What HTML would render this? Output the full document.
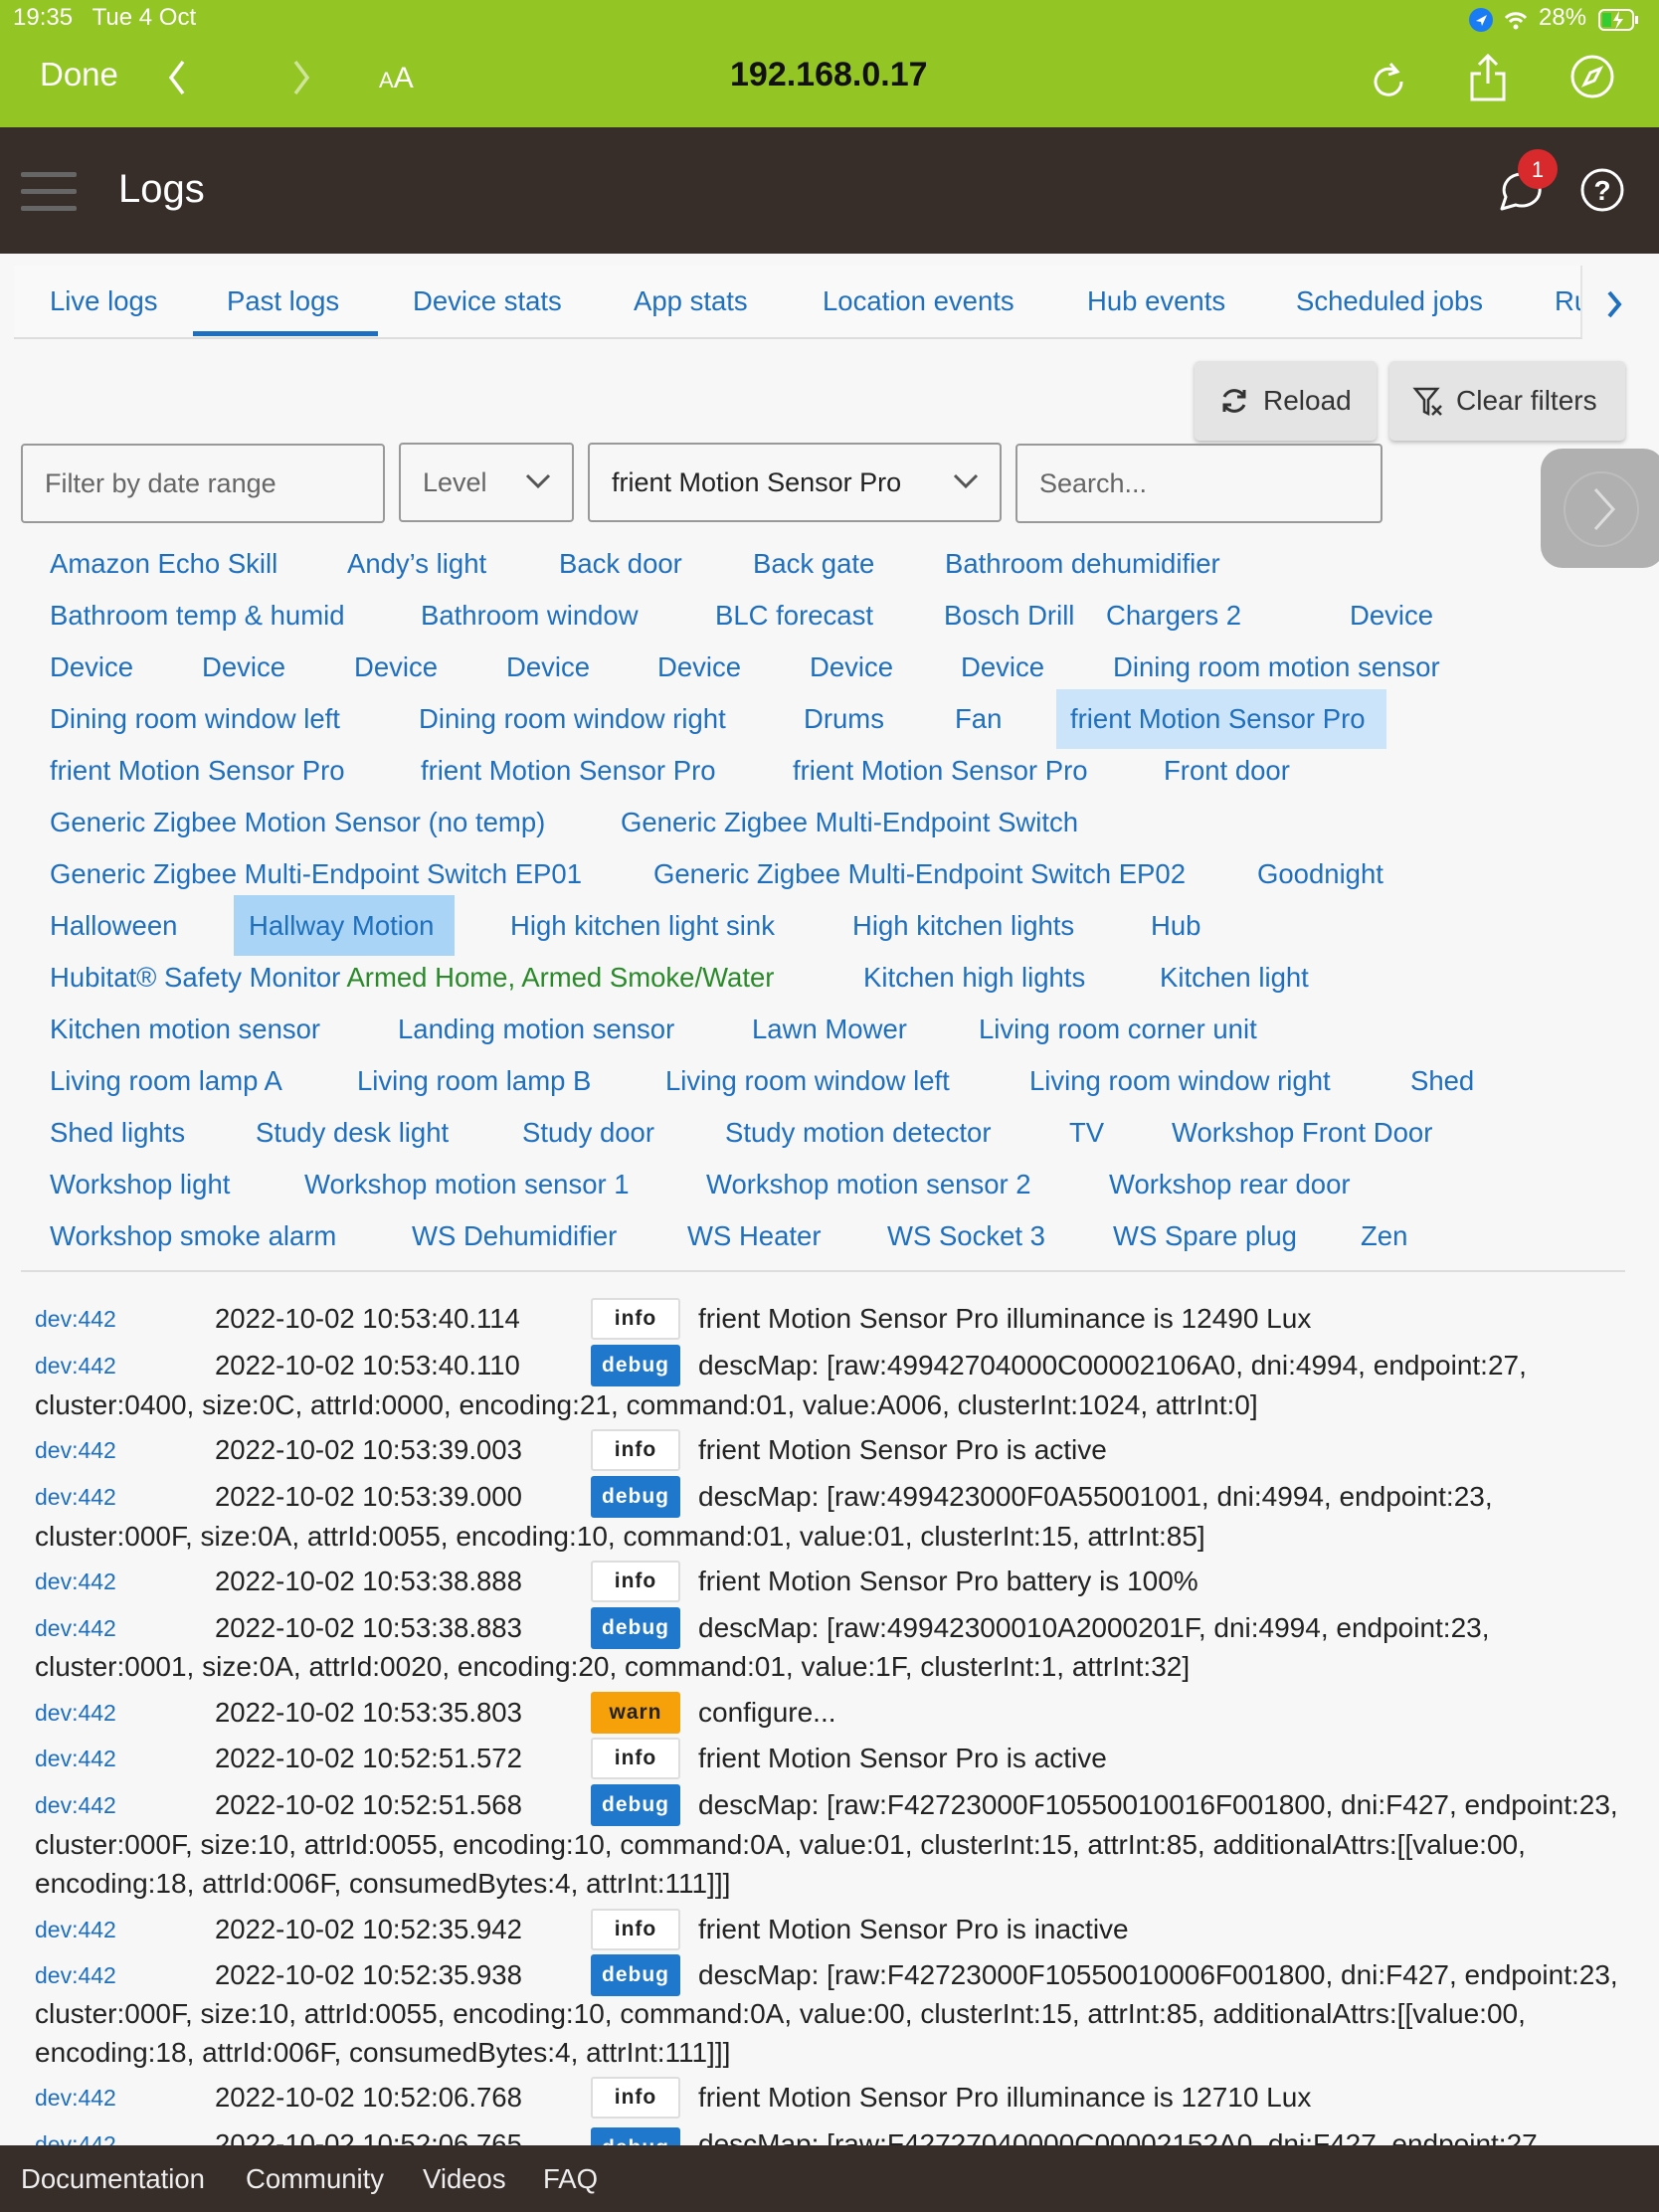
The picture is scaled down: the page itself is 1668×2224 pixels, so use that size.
<!DOCTYPE html>
<html><head><meta charset="utf-8"><style>
*{box-sizing:border-box;margin:0;padding:0}
body{width:1668px;height:2224px;overflow:hidden;background:#f7f7f7;font-family:"Liberation Sans",sans-serif;position:relative}
.a{position:absolute;white-space:nowrap}
.lk{color:#1f6fbf;font-size:27.5px;line-height:40px}
.dv{color:#1f6fbf;font-size:23px;line-height:40px}
.dt{color:#222;font-size:27.5px;line-height:40px}
.ms{color:#222;font-size:28px;line-height:40px}
.bd{position:absolute;width:90px;height:42px;border-radius:3px;font-size:21px;font-weight:bold;text-align:center;line-height:42px;letter-spacing:1px}
.info{background:#fff;border:2px solid #ddd;color:#222;line-height:38px}
.debug{background:#1f78cc;color:#fff}
.warn{background:#f7a10a;color:#222}
.box{position:absolute;border:2px solid #999;border-radius:4px;height:80px;font-size:27px;line-height:76px;padding-left:22px;color:#666}
</style></head><body>
<!-- status/browser bar -->
<div class="a" style="left:0;top:0;width:1668px;height:128px;background:#93c524"></div>
<div class="a" style="left:13px;top:4px;color:#fff;font-size:24px">19:35&nbsp;&nbsp; Tue 4 Oct</div>
<div class="a" style="left:1547px;top:4px;color:#fff;font-size:24px">28%</div>
<svg class="a" style="left:1476px;top:6px" width="60" height="28"><circle cx="13" cy="14" r="12" fill="#1a7cf5"/><path d="M8 15l11-6-5 11-1-4z" fill="#fff"/><path d="M38 12a14 14 0 0 1 20 0M42 16a8 8 0 0 1 12 0" stroke="#fff" stroke-width="3" fill="none"/><circle cx="48" cy="21" r="2.5" fill="#fff"/></svg>
<svg class="a" style="left:1604px;top:6px" width="60" height="28"><rect x="4" y="4" width="34" height="20" rx="5" stroke="#fff" stroke-width="2" fill="none"/><rect x="7" y="7" width="9" height="14" fill="#3c3"/><path d="M24 5l-6 10h5l-3 9 8-11h-5z" fill="#fff"/><rect x="40" y="10" width="3" height="8" fill="#fff"/></svg>
<div class="a" style="left:40px;top:56px;color:#fff;font-size:33px">Done</div>
<svg class="a" style="left:160px;top:56px" width="40" height="44"><path d="M24 6L12 22l12 16" stroke="#fff" stroke-width="3.5" fill="none"/></svg>
<svg class="a" style="left:285px;top:56px" width="40" height="44"><path d="M12 6l12 16-12 16" stroke="#cfe59a" stroke-width="3.5" fill="none"/></svg>
<div class="a" style="left:381px;top:62px;color:#fff;font-size:30px"><span style="font-size:22px">A</span>A</div>
<div class="a" style="left:734px;top:56px;color:#111;font-size:34px;font-weight:bold">192.168.0.17</div>
<svg class="a" style="left:1376px;top:58px" width="40" height="44"><path d="M28 14a13 13 0 1 0 5 10" stroke="#fff" stroke-width="3" fill="none"/><path d="M22 6l7 8-9 3" stroke="#fff" stroke-width="3" fill="none"/></svg>
<svg class="a" style="left:1474px;top:52px" width="44" height="52"><path d="M22 4v28M13 13l9-9 9 9" stroke="#fff" stroke-width="3" fill="none"/><path d="M15 22H6v26h32V22h-9" stroke="#fff" stroke-width="3" fill="none"/></svg>
<svg class="a" style="left:1578px;top:54px" width="46" height="46"><circle cx="23" cy="23" r="20" stroke="#fff" stroke-width="3" fill="none"/><path d="M31 15l-6 12-10 4 6-12z" stroke="#fff" stroke-width="3" fill="none"/></svg>
<!-- app bar -->
<div class="a" style="left:0;top:128px;width:1668px;height:127px;background:#372e2a"></div>
<div class="a" style="left:21px;top:173px;width:56px;height:5px;background:#666;border-radius:2px"></div>
<div class="a" style="left:21px;top:190px;width:56px;height:5px;background:#666;border-radius:2px"></div>
<div class="a" style="left:21px;top:207px;width:56px;height:5px;background:#666;border-radius:2px"></div>
<div class="a" style="left:119px;top:168px;color:#fff;font-size:40px">Logs</div>
<svg class="a" style="left:1500px;top:150px" width="140" height="80"><path d="M10 60l4-12a18 16 0 1 1 10 8z" stroke="#fff" stroke-width="3" fill="none" stroke-linejoin="round"/><circle cx="46" cy="20" r="20" fill="#d8292c"/><text x="46" y="28" fill="#fff" font-size="22" text-anchor="middle" font-family="Liberation Sans">1</text><circle cx="111" cy="41" r="20" stroke="#fff" stroke-width="3" fill="none"/><text x="111" y="51" fill="#fff" font-size="28" font-weight="bold" text-anchor="middle" font-family="Liberation Sans">?</text></svg>
<!-- tabs -->
<div class="a" style="left:14px;top:267px;width:1577px;height:74px;background:#f9f9f9;border-bottom:2px solid #ddd;border-right:2px solid #e4e4e4"></div>
<div class="a lk" style="left:50px;top:283px">Live logs</div>
<div class="a lk" style="left:228px;top:283px">Past logs</div>
<div class="a lk" style="left:415px;top:283px">Device stats</div>
<div class="a lk" style="left:637px;top:283px">App stats</div>
<div class="a lk" style="left:827px;top:283px">Location events</div>
<div class="a lk" style="left:1093px;top:283px">Hub events</div>
<div class="a lk" style="left:1303px;top:283px">Scheduled jobs</div>
<div class="a lk" style="left:1563px;top:283px;width:26px;overflow:hidden">Ru</div>
<div class="a" style="left:194px;top:333px;width:186px;height:5px;background:#1f6fbf"></div>
<svg class="a" style="left:1612px;top:288px" width="24" height="36"><path d="M6 6l10 12-10 12" stroke="#1f6fbf" stroke-width="4" fill="none"/></svg>
<!-- buttons -->
<div class="a" style="left:1201px;top:363px;width:183px;height:80px;background:#e4e4e4;border-radius:5px;box-shadow:0 2px 4px rgba(0,0,0,.25)"></div>
<svg class="a" style="left:1226px;top:388px" width="30" height="30"><path d="M25 11A11 11 0 0 0 5 11M5 19a11 11 0 0 0 20 0" stroke="#333" stroke-width="3" fill="none"/><path d="M25 4v7h-7M5 26v-7h7" stroke="#333" stroke-width="3" fill="none"/></svg>
<div class="a" style="left:1270px;top:383px;color:#333;font-size:28px;line-height:40px">Reload</div>
<div class="a" style="left:1397px;top:363px;width:237px;height:80px;background:#e4e4e4;border-radius:5px;box-shadow:0 2px 4px rgba(0,0,0,.25)"></div>
<svg class="a" style="left:1420px;top:388px" width="32" height="32"><path d="M3 3h22l-9 11v14l-4-2V14z" stroke="#333" stroke-width="2.5" fill="none"/><path d="M20 20l9 9M29 20l-9 9" stroke="#333" stroke-width="2.5"/></svg>
<div class="a" style="left:1464px;top:383px;color:#333;font-size:28px;line-height:40px">Clear filters</div>
<!-- inputs -->
<div class="box" style="left:21px;top:446px;width:366px">Filter by date range</div>
<div class="box" style="left:401px;top:445px;width:176px">Level</div>
<svg class="a" style="left:527px;top:474px" width="28" height="20"><path d="M3 4l11 11 11-11" stroke="#555" stroke-width="3" fill="none"/></svg>
<div class="box" style="left:591px;top:445px;width:416px;color:#222">frient Motion Sensor Pro</div>
<svg class="a" style="left:957px;top:474px" width="28" height="20"><path d="M3 4l11 11 11-11" stroke="#555" stroke-width="3" fill="none"/></svg>
<div class="box" style="left:1021px;top:446px;width:369px">Search...</div>
<div class="a" style="left:1549px;top:451px;width:125px;height:120px;background:#b0b0b0;border-radius:22px"></div>
<svg class="a" style="left:1568px;top:470px" width="84" height="84"><circle cx="42" cy="42" r="37" stroke="#bdbdbd" stroke-width="2" fill="none"/><path d="M36 22l18 20-18 20" stroke="#ddd" stroke-width="3" fill="none"/></svg>
<!-- device list -->
<div class="a" style="left:1062px;top:693px;width:332px;height:60px;background:#cce4f9"></div>
<div class="a" style="left:235px;top:900px;width:222px;height:61px;background:#a9d4f5"></div>
<div class="a lk" style="left:50px;top:547px">Amazon Echo Skill</div><div class="a lk" style="left:349px;top:547px">Andy’s light</div><div class="a lk" style="left:562px;top:547px">Back door</div><div class="a lk" style="left:757px;top:547px">Back gate</div><div class="a lk" style="left:950px;top:547px">Bathroom dehumidifier</div>
<div class="a lk" style="left:50px;top:599px">Bathroom temp &amp; humid</div><div class="a lk" style="left:423px;top:599px">Bathroom window</div><div class="a lk" style="left:719px;top:599px">BLC forecast</div><div class="a lk" style="left:949px;top:599px">Bosch Drill</div><div class="a lk" style="left:1112px;top:599px">Chargers 2</div><div class="a lk" style="left:1357px;top:599px">Device</div>
<div class="a lk" style="left:50px;top:651px">Device</div><div class="a lk" style="left:203px;top:651px">Device</div><div class="a lk" style="left:356px;top:651px">Device</div><div class="a lk" style="left:509px;top:651px">Device</div><div class="a lk" style="left:661px;top:651px">Device</div><div class="a lk" style="left:814px;top:651px">Device</div><div class="a lk" style="left:966px;top:651px">Device</div><div class="a lk" style="left:1119px;top:651px">Dining room motion sensor</div>
<div class="a lk" style="left:50px;top:703px">Dining room window left</div><div class="a lk" style="left:421px;top:703px">Dining room window right</div><div class="a lk" style="left:808px;top:703px">Drums</div><div class="a lk" style="left:960px;top:703px">Fan</div><div class="a lk" style="left:1076px;top:703px">frient Motion Sensor Pro</div>
<div class="a lk" style="left:50px;top:755px">frient Motion Sensor Pro</div><div class="a lk" style="left:423px;top:755px">frient Motion Sensor Pro</div><div class="a lk" style="left:797px;top:755px">frient Motion Sensor Pro</div><div class="a lk" style="left:1170px;top:755px">Front door</div>
<div class="a lk" style="left:50px;top:807px">Generic Zigbee Motion Sensor (no temp)</div><div class="a lk" style="left:624px;top:807px">Generic Zigbee Multi-Endpoint Switch</div>
<div class="a lk" style="left:50px;top:859px">Generic Zigbee Multi-Endpoint Switch EP01</div><div class="a lk" style="left:657px;top:859px">Generic Zigbee Multi-Endpoint Switch EP02</div><div class="a lk" style="left:1264px;top:859px">Goodnight</div>
<div class="a lk" style="left:50px;top:911px">Halloween</div><div class="a lk" style="left:250px;top:911px">Hallway Motion</div><div class="a lk" style="left:513px;top:911px">High kitchen light sink</div><div class="a lk" style="left:857px;top:911px">High kitchen lights</div><div class="a lk" style="left:1157px;top:911px">Hub</div>
<div class="a lk" style="left:50px;top:963px">Hubitat® Safety Monitor <span style="color:#2a8a2a">Armed Home, Armed Smoke/Water</span></div><div class="a lk" style="left:868px;top:963px">Kitchen high lights</div><div class="a lk" style="left:1166px;top:963px">Kitchen light</div>
<div class="a lk" style="left:50px;top:1015px">Kitchen motion sensor</div><div class="a lk" style="left:400px;top:1015px">Landing motion sensor</div><div class="a lk" style="left:756px;top:1015px">Lawn Mower</div><div class="a lk" style="left:984px;top:1015px">Living room corner unit</div>
<div class="a lk" style="left:50px;top:1067px">Living room lamp A</div><div class="a lk" style="left:359px;top:1067px">Living room lamp B</div><div class="a lk" style="left:669px;top:1067px">Living room window left</div><div class="a lk" style="left:1035px;top:1067px">Living room window right</div><div class="a lk" style="left:1418px;top:1067px">Shed</div>
<div class="a lk" style="left:50px;top:1119px">Shed lights</div><div class="a lk" style="left:257px;top:1119px">Study desk light</div><div class="a lk" style="left:525px;top:1119px">Study door</div><div class="a lk" style="left:729px;top:1119px">Study motion detector</div><div class="a lk" style="left:1075px;top:1119px">TV</div><div class="a lk" style="left:1178px;top:1119px">Workshop Front Door</div>
<div class="a lk" style="left:50px;top:1171px">Workshop light</div><div class="a lk" style="left:306px;top:1171px">Workshop motion sensor 1</div><div class="a lk" style="left:710px;top:1171px">Workshop motion sensor 2</div><div class="a lk" style="left:1115px;top:1171px">Workshop rear door</div>
<div class="a lk" style="left:50px;top:1223px">Workshop smoke alarm</div><div class="a lk" style="left:414px;top:1223px">WS Dehumidifier</div><div class="a lk" style="left:691px;top:1223px">WS Heater</div><div class="a lk" style="left:892px;top:1223px">WS Socket 3</div><div class="a lk" style="left:1119px;top:1223px">WS Spare plug</div><div class="a lk" style="left:1368px;top:1223px">Zen</div>
<div class="a" style="left:21px;top:1277px;width:1613px;height:2px;background:#ddd"></div>
<!-- logs -->
<div class="a dv" style="left:35px;top:1306px">dev:442</div><div class="a dt" style="left:216px;top:1306px">2022-10-02 10:53:40.114</div><div class="bd info" style="left:594px;top:1305px">info</div><div class="a ms" style="left:702px;top:1306px">frient Motion Sensor Pro illuminance is 12490 Lux</div>
<div class="a dv" style="left:35px;top:1353px">dev:442</div><div class="a dt" style="left:216px;top:1353px">2022-10-02 10:53:40.110</div><div class="bd debug" style="left:594px;top:1352px">debug</div><div class="a ms" style="left:702px;top:1353px">descMap: [raw:49942704000C00002106A0, dni:4994, endpoint:27,</div>
<div class="a ms" style="left:35px;top:1393px">cluster:0400, size:0C, attrId:0000, encoding:21, command:01, value:A006, clusterInt:1024, attrInt:0]</div>
<div class="a dv" style="left:35px;top:1438px">dev:442</div><div class="a dt" style="left:216px;top:1438px">2022-10-02 10:53:39.003</div><div class="bd info" style="left:594px;top:1437px">info</div><div class="a ms" style="left:702px;top:1438px">frient Motion Sensor Pro is active</div>
<div class="a dv" style="left:35px;top:1485px">dev:442</div><div class="a dt" style="left:216px;top:1485px">2022-10-02 10:53:39.000</div><div class="bd debug" style="left:594px;top:1484px">debug</div><div class="a ms" style="left:702px;top:1485px">descMap: [raw:499423000F0A55001001, dni:4994, endpoint:23,</div>
<div class="a ms" style="left:35px;top:1525px">cluster:000F, size:0A, attrId:0055, encoding:10, command:01, value:01, clusterInt:15, attrInt:85]</div>
<div class="a dv" style="left:35px;top:1570px">dev:442</div><div class="a dt" style="left:216px;top:1570px">2022-10-02 10:53:38.888</div><div class="bd info" style="left:594px;top:1569px">info</div><div class="a ms" style="left:702px;top:1570px">frient Motion Sensor Pro battery is 100%</div>
<div class="a dv" style="left:35px;top:1617px">dev:442</div><div class="a dt" style="left:216px;top:1617px">2022-10-02 10:53:38.883</div><div class="bd debug" style="left:594px;top:1616px">debug</div><div class="a ms" style="left:702px;top:1617px">descMap: [raw:49942300010A2000201F, dni:4994, endpoint:23,</div>
<div class="a ms" style="left:35px;top:1656px">cluster:0001, size:0A, attrId:0020, encoding:20, command:01, value:1F, clusterInt:1, attrInt:32]</div>
<div class="a dv" style="left:35px;top:1702px">dev:442</div><div class="a dt" style="left:216px;top:1702px">2022-10-02 10:53:35.803</div><div class="bd warn" style="left:594px;top:1701px">warn</div><div class="a ms" style="left:702px;top:1702px">configure...</div>
<div class="a dv" style="left:35px;top:1748px">dev:442</div><div class="a dt" style="left:216px;top:1748px">2022-10-02 10:52:51.572</div><div class="bd info" style="left:594px;top:1747px">info</div><div class="a ms" style="left:702px;top:1748px">frient Motion Sensor Pro is active</div>
<div class="a dv" style="left:35px;top:1795px">dev:442</div><div class="a dt" style="left:216px;top:1795px">2022-10-02 10:52:51.568</div><div class="bd debug" style="left:594px;top:1794px">debug</div><div class="a ms" style="left:702px;top:1795px">descMap: [raw:F42723000F10550010016F001800, dni:F427, endpoint:23,</div>
<div class="a ms" style="left:35px;top:1835px">cluster:000F, size:10, attrId:0055, encoding:10, command:0A, value:01, clusterInt:15, attrInt:85, additionalAttrs:[[value:00,</div>
<div class="a ms" style="left:35px;top:1874px">encoding:18, attrId:006F, consumedBytes:4, attrInt:111]]]</div>
<div class="a dv" style="left:35px;top:1920px">dev:442</div><div class="a dt" style="left:216px;top:1920px">2022-10-02 10:52:35.942</div><div class="bd info" style="left:594px;top:1919px">info</div><div class="a ms" style="left:702px;top:1920px">frient Motion Sensor Pro is inactive</div>
<div class="a dv" style="left:35px;top:1966px">dev:442</div><div class="a dt" style="left:216px;top:1966px">2022-10-02 10:52:35.938</div><div class="bd debug" style="left:594px;top:1965px">debug</div><div class="a ms" style="left:702px;top:1966px">descMap: [raw:F42723000F10550010006F001800, dni:F427, endpoint:23,</div>
<div class="a ms" style="left:35px;top:2005px">cluster:000F, size:10, attrId:0055, encoding:10, command:0A, value:00, clusterInt:15, attrInt:85, additionalAttrs:[[value:00,</div>
<div class="a ms" style="left:35px;top:2044px">encoding:18, attrId:006F, consumedBytes:4, attrInt:111]]]</div>
<div class="a dv" style="left:35px;top:2089px">dev:442</div><div class="a dt" style="left:216px;top:2089px">2022-10-02 10:52:06.768</div><div class="bd info" style="left:594px;top:2088px">info</div><div class="a ms" style="left:702px;top:2089px">frient Motion Sensor Pro illuminance is 12710 Lux</div>
<div class="a dv" style="left:35px;top:2136px">dev:442</div><div class="a dt" style="left:216px;top:2136px">2022-10-02 10:52:06.765</div><div class="bd debug" style="left:594px;top:2139px">debug</div><div class="a ms" style="left:702px;top:2136px">descMap: [raw:F42727040000C00002152A0, dni:F427, endpoint:27,</div>
<!-- footer -->
<div class="a" style="left:0;top:2157px;width:1668px;height:67px;background:#372e2a"></div>
<div class="a" style="left:21px;top:2171px;color:#eee;font-size:27.5px;line-height:40px">Documentation</div>
<div class="a" style="left:247px;top:2171px;color:#eee;font-size:27.5px;line-height:40px">Community</div>
<div class="a" style="left:425px;top:2171px;color:#eee;font-size:27.5px;line-height:40px">Videos</div>
<div class="a" style="left:546px;top:2171px;color:#eee;font-size:27.5px;line-height:40px">FAQ</div>
</body></html>
